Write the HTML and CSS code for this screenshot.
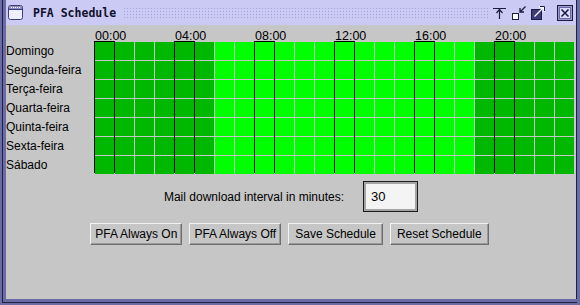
FILE: index.html
```html
<!DOCTYPE html>
<html>
<head>
<title>PFA Schedule</title>
<link rel="stylesheet" href="styles.css">
</head>
<body>

<div class="window">
  <!-- Title bar -->
  <div class="titlebar">
    <svg class="win-icon" width="15" height="15" viewBox="0 0 15 15">
      <rect x="0.5" y="0.5" width="14" height="14" rx="2" fill="#eeeeff" stroke="#3c3c78"/>
      <rect x="1" y="1" width="13" height="3" fill="#8c8cc8"/>
      <path d="M3 2.5h1M5 2.5h1M7 2.5h1M9 2.5h1M11 2.5h1" stroke="#ffffff"/>
      <path d="M1 4.5h13" stroke="#3c3c78"/>
    </svg>
    <span class="title">PFA Schedule</span>
    <div class="title-fill"></div>
    <div class="title-buttons">
      <svg width="16" height="16" viewBox="0 0 16 16">
        <path d="M1 3.5h13M7.5 4v10M4.5 8l3-3.5 3 3.5" fill="none" stroke="#1c1c40" stroke-width="1.2"/>
      </svg>
      <svg width="16" height="16" viewBox="0 0 16 16">
        <rect x="1.5" y="8.5" width="6" height="6" fill="#ffffff" stroke="#1c1c40"/>
        <path d="M14.5 1.5l-5 5M9 3v4h4" fill="none" stroke="#1c1c40" stroke-width="1.3"/>
      </svg>
      <svg width="16" height="16" viewBox="0 0 16 16">
        <rect x="1.5" y="4.5" width="10" height="10" fill="#3c3c78" stroke="#1c1c40"/>
        <path d="M4.5 11.5l9-9M9 2h5v5" fill="none" stroke="#ffffff" stroke-width="1.3"/>
        <path d="M10 1.5h4.5v4.5" fill="none" stroke="#1c1c40"/>
      </svg>
      <svg class="close" width="16" height="16" viewBox="0 0 16 16">
        <rect x="0.5" y="0.5" width="15" height="15" fill="#9a9acc" stroke="#1c1c40"/>
        <rect x="2.5" y="2.5" width="11" height="11" fill="#dcdcff" stroke="#6a6aa6"/>
        <path d="M4.5 4.5l7 7M11.5 4.5l-7 7" stroke="#1c1c40" stroke-width="1.6"/>
      </svg>
    </div>
  </div>

  <div class="content">
    <!-- Weekly schedule -->
    <div class="schedule">
      <div class="days">
        <div class="day">Domingo</div>
        <div class="day">Segunda-feira</div>
        <div class="day">Terça-feira</div>
        <div class="day">Quarta-feira</div>
        <div class="day">Quinta-feira</div>
        <div class="day">Sexta-feira</div>
        <div class="day">Sábado</div>
      </div>
      <div class="chart">
        <div class="hours">
          <span>00:00</span><span>04:00</span><span>08:00</span>
          <span>12:00</span><span>16:00</span><span>20:00</span>
        </div>
        <div class="grid" id="grid"></div>
      </div>
    </div>

    <!-- Download interval -->
    <div class="interval">
      <label for="minutes">Mail download interval in minutes:</label>
      <input id="minutes" type="text" value="30">
    </div>

    <!-- Actions -->
    <div class="actions">
      <button>PFA Always On</button>
      <button>PFA Always Off</button>
      <button class="wide">Save Schedule</button>
      <button class="wide">Reset Schedule</button>
    </div>
  </div>
</div>

<script>
// Build the hour columns, 7 days each
const grid = document.getElementById('grid');

for (let h = 0; h < 24; h++) {
  const col = document.createElement('div');
  col.className = 'col';
  if (h >= 6 && h < 19) col.classList.add('on');
  if (h % 4 === 0) col.classList.add('mark');
  for (let d = 0; d < 7; d++) {
    const cell = document.createElement('div');
    cell.className = 'cell';
    col.appendChild(cell);
  }
  grid.appendChild(col);
}
</script>
</body>
</html>
```

FILE: styles.css
```css
* { box-sizing: border-box; }

body {
  margin: 0;
  width: 580px;
  height: 305px;
  overflow: hidden;
  padding-left: 2px;
  background: #6b6ba6;
  font-family: "Liberation Sans", Arial, sans-serif;
  font-size: 12px;
  color: #000;
}

/* Window frame */
.window {
  width: 575px;
  padding: 0 0 3px 3px;
  border-left: 1px solid #202044;
  border-bottom: 1px solid #202044;
}

.titlebar {
  display: flex;
  align-items: center;
  height: 25px;
  padding-left: 2px;
  background: #cacaf4;
  border-right: 1px solid #202044;
}

.title {
  margin-left: 10px;
  font-family: "DejaVu Sans Mono", monospace;
  font-weight: bold;
  font-size: 11.5px;
  color: #10102a;
}

.title-fill {
  flex: 1;
  height: 12px;
  margin: 0 3px 0 7px;
  background: radial-gradient(circle, #a4a4d8 0.75px, transparent 0.9px) 0 0 / 3px 3px;
}

.title-buttons {
  display: flex;
  gap: 3px;
  padding-right: 3px;
}

.title-buttons .close { margin-left: 8px; }

.content {
  height: 274px;
  background: #c6c6c6;
  border-right: 1px solid #202044;
}

/* Schedule grid */
.schedule { display: flex; }

.days {
  width: 89px;
  padding-top: 17px;
}

.day {
  height: 19px;
  line-height: 19px;
  white-space: nowrap;
}

.hours {
  display: flex;
  height: 17px;
}

.hours span {
  width: 80px;
  padding-top: 4px;
  font-size: 12.5px;
  line-height: 14px;
}

.grid {
  display: flex;
  gap: 1px;
}

.col {
  display: flex;
  flex-direction: column;
  gap: 1px;
  width: 19px;
}

.cell {
  height: 18px;
  background: #00b800;
}

.col.on .cell { background: #00ff00; }

.col.mark { box-shadow: -1px -1px 0 #000, 1px -1px 0 #000; }

/* Interval row */
.interval {
  display: flex;
  justify-content: center;
  align-items: center;
  gap: 19px;
  margin-top: 6px;
}

.interval input {
  width: 55px;
  height: 31px;
  padding: 0 0 0 7px;
  font-family: "Liberation Sans", Arial, sans-serif;
  font-size: 13px;
  color: #000;
  border: 1px solid #1c1c1c;
  box-shadow: inset 0 0 0 2px #a4a4a4;
  background: #f4f4f4;
  outline: none;
}

/* Buttons */
.actions {
  display: flex;
  justify-content: center;
  gap: 7px;
  margin-top: 11px;
  padding-right: 3px;
}

.actions button {
  height: 22px;
  padding: 0 4px;
  font-family: "Liberation Sans", Arial, sans-serif;
  font-size: 12px;
  color: #000;
  background: #c6c6c6;
  border: 1px solid;
  border-color: #f2f2f2 #6e6e6e #6e6e6e #f2f2f2;
  box-shadow: inset -1px -1px 0 #9a9a9a;
}

.actions button.wide { padding: 0 6px; }
```
